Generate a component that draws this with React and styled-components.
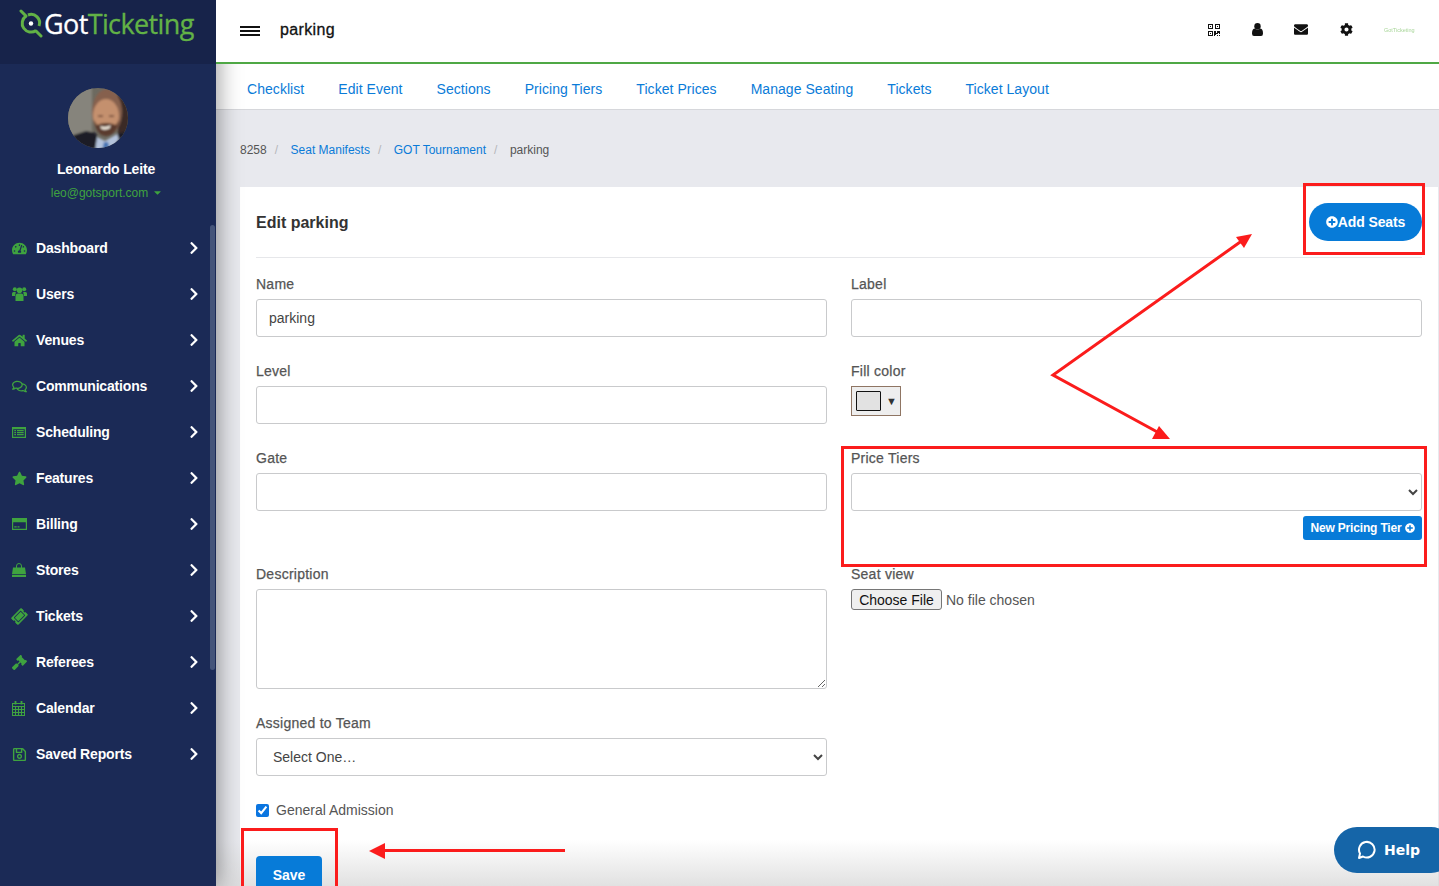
import React from 'react';
import styled, {createGlobalStyle} from 'styled-components';
import {
    FaTachometerAlt, FaHome, FaRegComments, FaStar,
    FaTicketAlt, FaGavel, FaRegSave, FaChevronRight,
    FaEnvelope, FaCog, FaPlusCircle, FaCaretDown,
} from 'react-icons/fa';

const GlobalStyle = createGlobalStyle`
    html, body {
        margin: 0;
        height: 100%;
        overflow: hidden;
        background: #e8e9ee;
        font-family: "Liberation Sans", Arial, sans-serif;
    }
    * { box-sizing: border-box; }
`

const Page = styled.div`
    position: relative;
    width: 1439px;
    height: 886px;
    overflow: hidden;
    display: flex;
`
const Sidebar = styled.aside`
    position: relative;
    width: 216px;
    height: 886px;
    flex: none;
    background: #1b2a56;
    color: #fff;
    z-index: 2;
    box-shadow: 2px 0 22px rgba(0,0,0,.4);
`
const LogoBar = styled.div`
    height: 64px;
    background: #17234a;
    display: flex;
    align-items: flex-start;
    padding: 9px 0 0 19px;
`
const LogoText = styled.span`
    font-family: "Open Sans", sans-serif;
    font-size: 27px;
    line-height: 30px;
    letter-spacing: -.62px;
    color: #fff;
    margin-left: 1px;
    -webkit-text-stroke: .3px #fff;
    b { font-weight: 400; color: #62b246; -webkit-text-stroke: .3px #62b246; }
`
const Profile = styled.div`
    height: 161px;
    padding-top: 24px;
    text-align: center;
`
const AvatarWrap = styled.div`
    width: 60px;
    height: 60px;
    margin: 0 0 0 68px;
    border-radius: 50%;
    overflow: hidden;
`
const UserName = styled.div`
    margin-top: 12px;
    font-size: 14px;
    line-height: 18px;
    font-weight: 700;
    letter-spacing: -.15px;
    padding-right: 4px;
`
const UserMail = styled.div`
    margin-top: 7px;
    padding-right: 2px;
    font-size: 12px;
    line-height: 16px;
    color: #3fa33f;
    svg { margin-left: 4px; vertical-align: -1px; font-size: 11px; }
`
const NavItem = styled.div`
    display: flex;
    align-items: center;
    height: 46px;
    padding-left: 12px;
    font-size: 14px;
    font-weight: 700;
    letter-spacing: -.17px;
`
const NavIcon = styled.span`
    width: 24px;
    display: flex;
    align-items: center;
    color: #3fa33f;
    font-size: 15px;
    svg { transform: ${p => p.$tilt ? 'rotate(-45deg)' : 'none'}; }
`
const NavArrow = styled.span`
    margin-left: auto;
    margin-right: 15px;
    margin-top: -1px;
    display: flex;
    font-size: 14px;
`
const ScrollThumb = styled.div`
    position: absolute;
    left: 210px;
    top: 225px;
    width: 5px;
    height: 445px;
    border-radius: 3px;
    background: #45557a;
`
const Content = styled.main`
    position: relative;
    flex: 1;
    min-width: 0;
`
const TopBar = styled.header`
    position: relative;
    z-index: 3;
    height: 64px;
    background: #fff;
    border-bottom: 2px solid #4fa845;
    display: flex;
    align-items: center;
    padding: 0 24px 3px;
`
const Burger = styled.span`
    width: 20px;
    height: 10px;
    border-top: 2px solid #111;
    border-bottom: 2px solid #111;
    position: relative;
    margin: 2px 20px 0 0;
    &::after {
        content: "";
        position: absolute;
        left: 0;
        right: 0;
        top: 2px;
        height: 2px;
        background: #111;
    }
`
const PageName = styled.span`
    font-size: 16px;
    font-weight: 500;
    letter-spacing: .35px;
    color: #111;
    -webkit-text-stroke: .3px #111;
`
const TopIcons = styled.div`
    position: absolute;
    left: 991px;
    top: 22px;
    display: flex;
    align-items: center;
    color: #111;
`
const TopIcon = styled.span`
    display: flex;
    justify-content: center;
    width: 14px;
    margin-right: ${p => p.$gap}px;
    font-size: ${p => p.$size || 13}px;
`
const MiniLogo = styled.span`
    font-size: 5.5px;
    width: 31px;
    margin-left: 1px;
    color: #a9d69a;
    filter: blur(.3px);
    white-space: nowrap;
`
const Tabs = styled.nav`
    height: 46px;
    background: #fff;
    border-bottom: 1px solid #d6d7db;
    display: flex;
    align-items: center;
    padding: 4px 0 0 31px;
    gap: 34px;
`
const Tab = styled.a`
    font-size: 14px;
    letter-spacing: .05px;
    color: #0a7bd8;
`
const Crumbs = styled.div`
    height: 77px;
    padding: 33px 0 0 24px;
    font-size: 12px;
    line-height: 15px;
    color: #555;
    display: flex;
`
const Crumb = styled.a`
    color: #0a7bd8;
`
const CrumbSep = styled.span`
    color: #b5b6ba;
    margin: 0 12.500px 0 8px;
`
const Card = styled.section`
    margin-left: 24px;
    width: 1198px;
    height: 700px;
    background: #fff;
    padding: 0 16px;
`
const CardHead = styled.div`
    height: 71px;
    border-bottom: 1px solid #e6e7ea;
    display: flex;
    align-items: center;
    justify-content: space-between;
`
const CardTitle = styled.h2`
    margin: 1px 0 0;
    font-size: 16px;
    font-weight: 700;
    color: #333;
`
const AddButton = styled.button`
    width: 113px;
    height: 38px;
    border: 0;
    border-radius: 19px;
    background: #077bd8;
    color: #fff;
    font: 700 14px "Liberation Sans", Arial, sans-serif;
    letter-spacing: -.1px;
    display: flex;
    align-items: center;
    justify-content: center;
    padding: 0;
    svg { font-size: 12px; }
`
const Form = styled.form`
    margin-top: 16px;
    display: grid;
    grid-template-columns: 571px 571px;
    column-gap: 24px;
    align-items: start;
`
const Field = styled.div`
    margin-bottom: 24px;
`
const Label = styled.label`
    display: block;
    font-size: 14px;
    line-height: 21px;
    margin-bottom: 4px;
    letter-spacing: .25px;
    color: #555;
    -webkit-text-stroke: .25px #555;
`
const controlStyle = `
    display: block;
    width: 100%;
    border: 1px solid #c9cacc;
    border-radius: 3px;
    background: #fff;
    font: 14px "Liberation Sans", Arial, sans-serif;
    color: #444;
`
const Input = styled.input`
    ${controlStyle}
    height: 38px;
    padding: 0 12px;
`
const Area = styled.textarea`
    ${controlStyle}
    height: 100px;
`
const Select = styled.select`
    ${controlStyle}
    height: 38px;
    padding: 0 12px;
`
const ColorPick = styled.div`
    width: 50px;
    height: 30px;
    background: #eee;
    border: 1px solid #8f7563;
    display: flex;
    align-items: center;
    padding-left: 4px;
    font-size: 11px;
    color: #333;
`
const Swatch = styled.span`
    width: 25px;
    height: 20px;
    background: #e2e2e2;
    border: 1px solid #111;
    border-radius: 1px;
    margin-right: 5px;
`
const RightAlign = styled.div`
    display: flex;
    justify-content: flex-end;
    margin-top: 5px;
`
const TierButton = styled.button`
    width: 119px;
    height: 24px;
    border: 0;
    border-radius: 3px;
    background: #077bd8;
    color: #fff;
    font: 700 12px "Liberation Sans", Arial, sans-serif;
    letter-spacing: -.17px;
    padding: 0;
    display: flex;
    align-items: center;
    justify-content: center;
    gap: 3px;
    svg { font-size: 10px; }
`
const FileInput = styled.input`
    font: 14px "Liberation Sans", Arial, sans-serif;
    color: #555;
    display: block;
    margin-top: 1px;
    &::file-selector-button {
        font: 14px "Liberation Sans", Arial, sans-serif;
        color: #111;
        height: 21px;
        width: 91px;
        padding: 0;
        margin-right: 4px;
        background: #efefef;
        border: 1px solid #767676;
        border-radius: 3px;
    }
`
const CheckRow = styled.div`
    grid-column: 1 / -1;
    height: 20px;
    display: flex;
    align-items: center;
    font-size: 14px;
    color: #555;
    input {
        width: 13px;
        height: 13px;
        margin: 0 7px 0 0;
        accent-color: #0a75e0;
    }
`
const SaveButton = styled.button`
    position: absolute;
    left: 40px;
    top: 856px;
    width: 66px;
    height: 38px;
    border: 0;
    border-radius: 4px;
    background: #077bd8;
    color: #fff;
    font: 700 14px "Liberation Sans", Arial, sans-serif;
    padding: 0 0 0;
    z-index: 2;
`
const BottomFade = styled.div`
    position: absolute;
    left: 216px;
    right: 0;
    bottom: 0;
    height: 46px;
    background: linear-gradient(rgba(215,215,215,0), rgba(215,215,215,.75));
    pointer-events: none;
    z-index: 1;
`
const HelpButton = styled.div`
    position: absolute;
    left: 1334px;
    top: 827px;
    width: 120px;
    height: 46px;
    border-radius: 23px;
    background: #1565a8;
    color: #fff;
    font: 700 14px "DejaVu Sans", sans-serif;
    display: flex;
    align-items: center;
    padding-left: 22px;
    gap: 8px;
    z-index: 4;
`
const Marks = styled.svg`
    position: absolute;
    left: 0;
    top: 0;
    z-index: 3;
    pointer-events: none;
`

const UsersIcon = () => (
    <svg width="15" height="14" viewBox="0 0 15 14" fill="currentColor">
        <circle cx="2.800" cy="2.200" r="2" />
        <circle cx="12.200" cy="2.200" r="2" />
        <circle cx="7.500" cy="3.300" r="2.800" />
        <path d="M0 9V6.500Q0 5 1.500 5h2.300L3 9zM15 9V6.500Q15 5 13.500 5h-2.300L12 9z" />
        <path d="M3.500 14V9q0-2.500 2.500-2.500h3q2.500 0 2.500 2.500v5z" />
    </svg>
)

const ListIcon = () => (
    <svg width="14" height="11" viewBox="0 0 14 11" fill="currentColor">
        <path d="M0 0h14v11H0zM1.200 2.200v7.600h11.600V2.200z" fillRule="evenodd" />
        <path d="M2.300 3h1.700v1.300H2.300zM5 3h6.700v1.300H5zM2.300 5h1.700v1.300H2.300zM5 5h6.700v1.300H5zM2.300 7h1.700v1.300H2.300zM5 7h6.700v1.300H5z" />
    </svg>
)

const CardIcon = () => (
    <svg width="15" height="12" viewBox="0 0 15 12" fill="currentColor">
        <path d="M0 0h15v12H0zM1.200 4.200v6.600h12.600V4.200z" fillRule="evenodd" />
        <path d="M2.200 8.300h2.500v1.200H2.200zM5.500 8.300h2v1.200h-2z" />
    </svg>
)

const BagIcon = () => (
    <svg width="14" height="14" viewBox="0 0 14 14" fill="currentColor">
        <path d="M4.500 5V3a2.500 2.500 0 0 1 5 0v2" fill="none" stroke="currentColor" strokeWidth="1" />
        <path d="M1 4.500h12l1 6.500H0zM0 11.800h14V14H0z" />
    </svg>
)

const CalendarIcon = () => (
    <svg width="13" height="15" viewBox="0 0 13 15" fill="none" stroke="currentColor" strokeWidth="1.100">
        <path d="M.5 2.500h12v12H.5zM.5 5.500h12M.5 8.500h12M.5 11.500h12M3.500 5.500v9M6.500 5.500v9M9.500 5.500v9" />
        <path d="M3.500 0v3.500M9.500 0v3.500" strokeWidth="1.800" />
    </svg>
)

const QrIcon = () => (
    <svg width="12" height="12" viewBox="0 0 12 12" fill="currentColor">
        <path d="M0 0h5v5H0zM1 1v3h3V1zM7 0h5v5H7zM8 1v3h3V1zM0 7h5v5H0zM1 8v3h3V8z" fillRule="evenodd" />
        <path d="M2 2h1v1H2zM9 2h1v1H9zM2 9h1v1H2zM6 7h2v2h1V7h3v3h-1V9h-1v1H8v1H7v1H6zM9 11h1v1H9zM11 11h1v1h-1z" />
    </svg>
)

const PersonIcon = () => (
    <svg width="11" height="13" viewBox="0 0 11 13" fill="currentColor">
        <circle cx="5.500" cy="3.200" r="3.200" />
        <path d="M0 10.500Q0 6 2.500 5.500q3 2 6 0Q11 6 11 10.500 11 13 9 13H2Q0 13 0 10.500z" />
    </svg>
)

const navItems = [
    ['Dashboard', FaTachometerAlt],
    ['Users', UsersIcon],
    ['Venues', FaHome],
    ['Communications', FaRegComments],
    ['Scheduling', ListIcon],
    ['Features', FaStar],
    ['Billing', CardIcon],
    ['Stores', BagIcon],
    ['Tickets', FaTicketAlt, true],
    ['Referees', FaGavel],
    ['Calendar', CalendarIcon],
    ['Saved Reports', FaRegSave],
]

const tabs = ['Checklist', 'Edit Event', 'Sections', 'Pricing Tiers', 'Ticket Prices', 'Manage Seating', 'Tickets', 'Ticket Layout']

const Avatar = () => (
    <svg width="60" height="60" viewBox="0 0 60 60">
        <defs>
            <filter id="soft"><feGaussianBlur stdDeviation="1.300" /></filter>
        </defs>
        <rect width="60" height="60" fill="#6d6a60" />
        <g filter="url(#soft)">
            <rect x="-3" y="-3" width="27" height="50" fill="#86847b" />
            <rect x="50" y="-3" width="13" height="66" fill="#3a2b26" />
            <path d="M-3 63V50l21-7 10 2 4 18z" fill="#1a1c28" />
            <path d="M63 63V42l-13 4-6 17z" fill="#1e1c26" />
            <path d="M27 63l2-14 8 4 12-7 2 5-8 12z" fill="#b4c3dc" />
            <path d="M34 63l2-9 4 0 2 9z" fill="#4a76b4" />
            <ellipse cx="39" cy="24" rx="15" ry="23" fill="#86604e" />
            <ellipse cx="38" cy="28" rx="13" ry="17" fill="#c4906e" />
            <path d="M26 32c1 9 5 16 12 16s12-7 13-16l-3 5q-10-4-19 0z" fill="#5a3b2d" />
            <path d="M32 38q6 2 11-1l-1.500 3.500q-4 2-8 .5z" fill="#efe9dd" />
            <path d="M30 27.500h5v1.200h-5zM41 27.500h5v1.200h-5z" fill="#59392a" />
        </g>
    </svg>
)

const LogoMark = () => (
    <svg width="24" height="29" viewBox="0 0 24 29" style={{flex: 'none'}}>
        <path d="M2 2l5 5M17 22l5 5" stroke="#62b246" strokeWidth="3" strokeLinecap="round" />
        <path d="M7 7a8.500 8.500 0 1 0 10 14.500" fill="none" stroke="#62b246" strokeWidth="3" />
        <path d="M9 6a8.500 8.500 0 0 1 11 11" fill="none" stroke="#62b246" strokeWidth="3" />
        <circle cx="12" cy="14.500" r="2.200" fill="#fff" />
    </svg>
)

export default function App() {
    return (
        <Page>
            <GlobalStyle />
            <Sidebar>
                <LogoBar>
                    <LogoMark />
                    <LogoText>Got<b>Ticketing</b></LogoText>
                </LogoBar>
                <Profile>
                    <AvatarWrap><Avatar /></AvatarWrap>
                    <UserName>Leonardo Leite</UserName>
                    <UserMail>leo@gotsport.com<FaCaretDown /></UserMail>
                </Profile>
                {navItems.map(([label, Icon, tilt]) => (
                    <NavItem key={label}>
                        <NavIcon $tilt={tilt}><Icon /></NavIcon>
                        {label}
                        <NavArrow><FaChevronRight /></NavArrow>
                    </NavItem>
                ))}
                <ScrollThumb />
            </Sidebar>
            <Content>
                <TopBar>
                    <Burger />
                    <PageName>parking</PageName>
                    <TopIcons>
                        <TopIcon $gap={29}><QrIcon /></TopIcon>
                        <TopIcon $gap={30}><PersonIcon /></TopIcon>
                        <TopIcon $gap={31} $size={15}><FaEnvelope /></TopIcon>
                        <TopIcon $gap={30}><FaCog /></TopIcon>
                        <MiniLogo>GotTicketing</MiniLogo>
                    </TopIcons>
                </TopBar>
                <Tabs>
                    {tabs.map(t => <Tab key={t}>{t}</Tab>)}
                </Tabs>
                <Crumbs>
                    8258<CrumbSep>/</CrumbSep>
                    <Crumb>Seat Manifests</Crumb><CrumbSep>/</CrumbSep>
                    <Crumb>GOT Tournament</Crumb><CrumbSep>/</CrumbSep>
                    parking
                </Crumbs>
                <Card>
                    <CardHead>
                        <CardTitle>Edit parking</CardTitle>
                        <AddButton type="button"><FaPlusCircle />Add Seats</AddButton>
                    </CardHead>
                    <Form>
                        <Field>
                            <Label>Name</Label>
                            <Input defaultValue="parking" />
                        </Field>
                        <Field>
                            <Label>Label</Label>
                            <Input />
                        </Field>
                        <Field>
                            <Label>Level</Label>
                            <Input />
                        </Field>
                        <Field>
                            <Label>Fill color</Label>
                            <ColorPick><Swatch />▼</ColorPick>
                        </Field>
                        <Field>
                            <Label>Gate</Label>
                            <Input />
                        </Field>
                        <Field>
                            <Label>Price Tiers</Label>
                            <Select />
                            <RightAlign>
                                <TierButton type="button">New Pricing Tier <FaPlusCircle /></TierButton>
                            </RightAlign>
                        </Field>
                        <Field>
                            <Label>Description</Label>
                            <Area />
                        </Field>
                        <Field>
                            <Label>Seat view</Label>
                            <FileInput type="file" />
                        </Field>
                        <Field>
                            <Label>Assigned to Team</Label>
                            <Select defaultValue="">
                                <option value="">Select One…</option>
                            </Select>
                        </Field>
                        <div />
                        <CheckRow>
                            <input type="checkbox" defaultChecked />
                            General Admission
                        </CheckRow>
                    </Form>
                </Card>
                <SaveButton type="button">Save</SaveButton>
            </Content>
            <BottomFade />
            <Marks width="1439" height="886" viewBox="0 0 1439 886">
                <g fill="none" stroke="#fb1c1c" strokeWidth="3">
                    <path d="M1304.500 184.500h119v69h-119z" />
                    <path d="M842.500 447.500h583v118h-583z" />
                    <path d="M242.500 886v-56.500h94v56.500" />
                    <path d="M1243 240L1053 375l108 59" />
                    <path d="M565 850.500H384" />
                </g>
                <g fill="#fb1c1c">
                    <path d="M1252 234l-16 3 8 11z" />
                    <path d="M1170 439l-18 0 7-13z" />
                    <path d="M369 851l16-8v16z" />
                </g>
            </Marks>
            <HelpButton>
                <svg width="20" height="20" viewBox="0 0 20 20">
                    <path d="M3 18l1-4.500a7.800 7.800 0 1 1 3 3z" fill="none" stroke="#fff" strokeWidth="2" strokeLinejoin="round" />
                </svg>
                Help
            </HelpButton>
        </Page>
    );
}
